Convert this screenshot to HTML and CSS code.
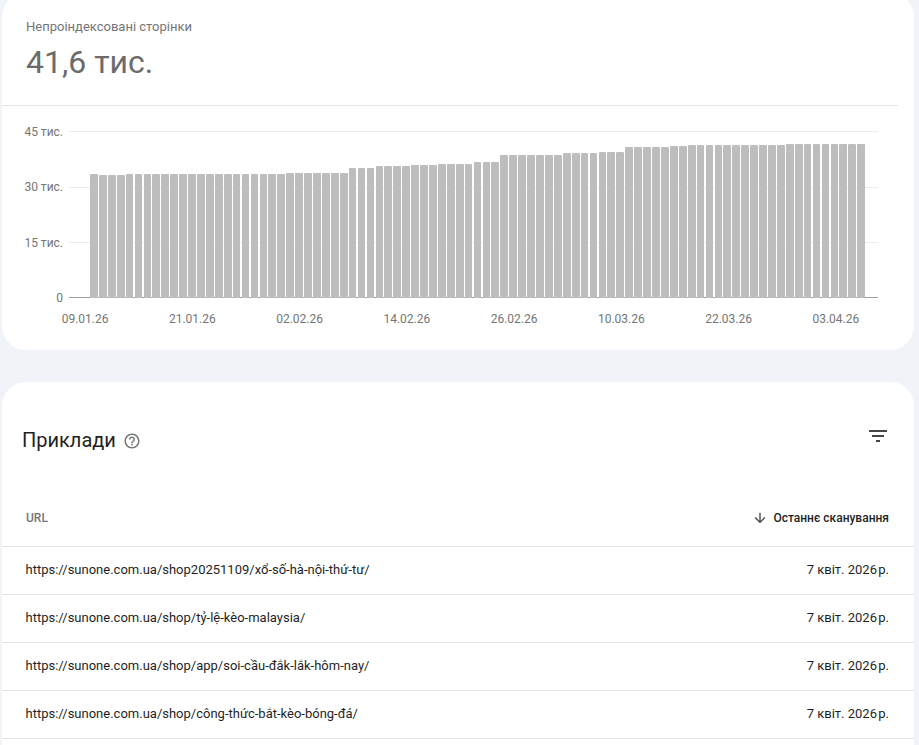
FILE: index.html
```html
<!DOCTYPE html>
<html lang="uk">
<head>
<meta charset="utf-8">
<title>Непроіндексовані сторінки</title>
<link rel="stylesheet" href="styles.css">
</head>
<body>
<main class="page">
  <section class="card summary">
    <header class="summary-head">
      <div class="summary-label">Непроіндексовані сторінки</div>
      <div class="summary-value">41,6 тис.</div>
    </header>
    <div class="chart">
      <div class="plot">
        <div class="grid-row"><span class="y-label">45 тис.</span><span class="grid-line"></span></div>
        <div class="grid-row"><span class="y-label">30 тис.</span><span class="grid-line"></span></div>
        <div class="grid-row"><span class="y-label">15 тис.</span><span class="grid-line"></span></div>
        <div class="grid-row"><span class="y-label">0</span><span class="grid-line axis"></span></div>
        <div class="bars">
          <i style="height:124px"></i><i style="height:123px"></i><i style="height:123px"></i><i style="height:123px"></i>
          <i style="height:124px"></i><i style="height:124px"></i><i style="height:124px"></i><i style="height:124px"></i><i style="height:124px"></i><i style="height:124px"></i>
          <i style="height:124px"></i><i style="height:124px"></i><i style="height:124px"></i><i style="height:124px"></i><i style="height:124px"></i><i style="height:124px"></i>
          <i style="height:124px"></i><i style="height:124px"></i><i style="height:124px"></i><i style="height:124px"></i><i style="height:124px"></i><i style="height:124px"></i>
          <i style="height:125px"></i><i style="height:125px"></i><i style="height:125px"></i><i style="height:125px"></i><i style="height:125px"></i><i style="height:125px"></i><i style="height:125px"></i>
          <i style="height:130px"></i><i style="height:130px"></i><i style="height:130px"></i>
          <i style="height:132px"></i><i style="height:132px"></i><i style="height:132px"></i><i style="height:132px"></i>
          <i style="height:133px"></i><i style="height:133px"></i><i style="height:133px"></i>
          <i style="height:134px"></i><i style="height:134px"></i><i style="height:134px"></i><i style="height:134px"></i>
          <i style="height:136px"></i><i style="height:136px"></i><i style="height:136px"></i>
          <i style="height:143px"></i><i style="height:143px"></i><i style="height:143px"></i><i style="height:143px"></i><i style="height:143px"></i><i style="height:143px"></i><i style="height:143px"></i>
          <i style="height:145px"></i><i style="height:145px"></i><i style="height:145px"></i><i style="height:145px"></i>
          <i style="height:146px"></i><i style="height:146px"></i><i style="height:146px"></i>
          <i style="height:151px"></i><i style="height:151px"></i><i style="height:151px"></i><i style="height:151px"></i><i style="height:151px"></i>
          <i style="height:152px"></i><i style="height:152px"></i>
          <i style="height:153px"></i><i style="height:153px"></i><i style="height:153px"></i><i style="height:153px"></i><i style="height:153px"></i><i style="height:153px"></i><i style="height:153px"></i><i style="height:153px"></i><i style="height:153px"></i><i style="height:153px"></i><i style="height:153px"></i>
          <i style="height:154px"></i><i style="height:154px"></i><i style="height:154px"></i><i style="height:154px"></i><i style="height:154px"></i><i style="height:154px"></i><i style="height:154px"></i><i style="height:154px"></i><i style="height:154px"></i>
        </div>
      </div>
      <div class="x-axis">
        <span>09.01.26</span><span>21.01.26</span><span>02.02.26</span><span>14.02.26</span><span>26.02.26</span><span>10.03.26</span><span>22.03.26</span><span>03.04.26</span>
      </div>
    </div>
  </section>

  <section class="card examples">
    <div class="examples-head">
      <h2 class="examples-title">Приклади</h2>
      <svg class="icon-help" viewBox="0 0 24 24" aria-hidden="true"><path d="M11 18h2v-2h-2v2zm1-16C6.48 2 2 6.48 2 12s4.48 10 10 10 10-4.48 10-10S17.52 2 12 2zm0 18c-4.41 0-8-3.59-8-8s3.59-8 8-8 8 3.59 8 8-3.59 8-8 8zm0-14c-2.21 0-4 1.79-4 4h2c0-1.1.9-2 2-2s2 .9 2 2c0 2-3 1.75-3 5h2c0-2.25 3-2.5 3-5 0-2.21-1.79-4-4-4z"/></svg>
      <svg class="icon-filter" viewBox="0 0 24 24" aria-hidden="true"><path d="M10 18h4v-2h-4v2zM3 6v2h18V6H3zm3 7h12v-2H6v2z"/></svg>
    </div>
    <div class="table">
      <div class="table-row table-header">
        <span class="col-url">URL</span>
        <span class="col-date"><svg class="icon-sort" viewBox="0 0 24 24" aria-hidden="true"><path d="M20 12l-1.41-1.41L13 16.17V4h-2v12.17l-5.58-5.59L4 12l8 8 8-8z"/></svg>Останнє сканування</span>
      </div>
      <div class="table-row"><span>https://sunone.com.ua/shop20251109/xổ-số-hà-nội-thứ-tư/</span><span>7 квіт. 2026&#8202;р.</span></div>
      <div class="table-row"><span>https://sunone.com.ua/shop/tỷ-lệ-kèo-malaysia/</span><span>7 квіт. 2026&#8202;р.</span></div>
      <div class="table-row"><span>https://sunone.com.ua/shop/app/soi-cầu-đắk-lắk-hôm-nay/</span><span>7 квіт. 2026&#8202;р.</span></div>
      <div class="table-row"><span>https://sunone.com.ua/shop/công-thức-bắt-kèo-bóng-đá/</span><span>7 квіт. 2026&#8202;р.</span></div>
    </div>
  </section>
</main>
</body>
</html>
```
FILE: styles.css
```css
html, body {
  margin: 0;
  height: 100%;
  overflow: hidden;
}
body {
  background: #f0f4f9;
  font-family: Roboto, "Liberation Sans", sans-serif;
  color: #1f1f1f;
}
.page {
  width: 912px;
  margin-left: 2px;
  margin-top: -7px;
  display: flex;
  flex-direction: column;
  gap: 32px;
}
.card {
  background: #fff;
  border-radius: 24px;
}
.summary {
  height: 357px;
}
.summary-head {
  margin-right: 16px;
  padding: 24px 24px 0;
  height: 88px;
  border-bottom: 1px solid #e3e3e3;
}
.summary-label {
  font-size: 13px;
  line-height: 20px;
  color: #757575;
}
.summary-value {
  margin-top: 5px;
  font-size: 32px;
  line-height: 40px;
  color: #6b6b6b;
}
.chart {
  padding-top: 17.4px;
}
.plot {
  position: relative;
  display: flex;
  flex-direction: column;
  gap: 38.33px;
  margin-right: 36px;
}
.grid-row {
  display: flex;
  align-items: center;
  height: 17px;
}
.y-label {
  width: 61px;
  margin-right: 6px;
  text-align: right;
  font-size: 12px;
  line-height: 16px;
  color: #757575;
}
.grid-line {
  flex: 1;
  height: 1px;
  background: #ebebeb;
}
.grid-line.axis {
  background: #9e9e9e;
}
.bars {
  position: absolute;
  left: 88px;
  bottom: 8px;
  width: 775px;
  display: flex;
  align-items: flex-end;
  gap: 1.2px;
}
.bars i {
  display: block;
  flex: 1;
  background: #bdbdbd;
  border-radius: 1px 1px 0 0;
}
.x-axis {
  display: flex;
  margin-top: 4.2px;
  margin-left: 29.5px;
}
.x-axis span {
  width: 107.25px;
  text-align: center;
  font-size: 12px;
  line-height: 16px;
  color: #757575;
}
.examples {
  padding-bottom: 40px;
}
.examples-head {
  display: flex;
  align-items: center;
  height: 32px;
  padding: 43px 24px 0 20px;
}
.examples-title {
  margin: -2px 0 0;
  font-size: 20px;
  font-weight: 400;
  line-height: 32px;
  color: #1f1f1f;
}
.icon-help {
  width: 18px;
  height: 18px;
  margin-left: 7.5px;
  fill: #757575;
}
.icon-filter {
  width: 24px;
  height: 24px;
  margin-left: auto;
  margin-top: -10px;
  fill: #444746;
}
.table {
  margin-top: 33px;
}
.table-row {
  display: flex;
  justify-content: space-between;
  align-items: center;
  height: 45.5px;
  padding: 0 25px 1.5px 23.5px;
  border-bottom: 1px solid #e3e3e3;
  font-size: 13px;
  color: #1f1f1f;
}
.table-header {
  height: 56px;
  padding: 0 25px 0 24px;
  font-size: 12px;
  font-weight: 500;
}
.col-url {
  color: #757575;
}
.col-date {
  display: flex;
  align-items: center;
  gap: 5px;
}
.icon-sort {
  width: 16px;
  height: 16px;
  fill: #444746;
}
```
